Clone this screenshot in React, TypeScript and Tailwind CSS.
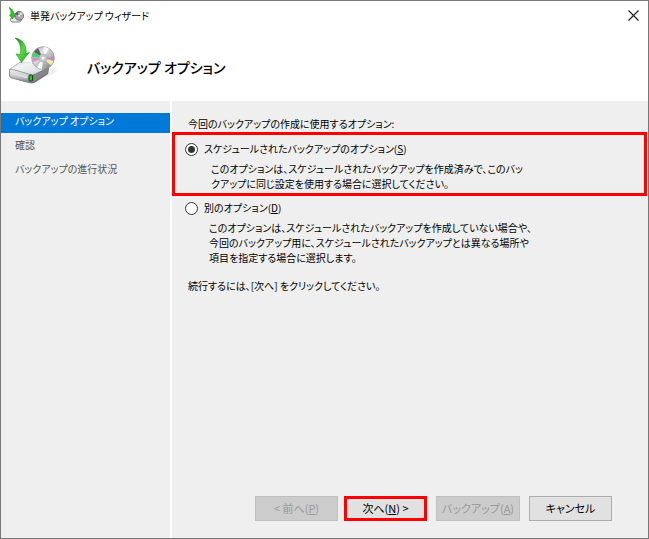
import { useState } from 'react';

const steps = ['バックアップ オプション', '確認', 'バックアップの進行状況'];

function BackupIcon() {
  return (
    <svg viewBox="0 0 48 48" className="h-12 w-12" aria-hidden="true">
      <defs>
        <linearGradient id="drive-top" x1="0" y1="0" x2="1" y2="1">
          <stop offset="0" stopColor="#c9cacc" />
          <stop offset="0.3" stopColor="#f2f3f4" />
          <stop offset="0.7" stopColor="#e2e3e5" />
          <stop offset="1" stopColor="#97999c" />
        </linearGradient>
        <linearGradient id="drive-front" x1="0" y1="0" x2="0" y2="1">
          <stop offset="0" stopColor="#f3f4f5" />
          <stop offset="0.6" stopColor="#bcbec1" />
          <stop offset="1" stopColor="#7c7e81" />
        </linearGradient>
        <linearGradient id="disc" x1="0" y1="0" x2="1" y2="1">
          <stop offset="0" stopColor="#97979a" />
          <stop offset="0.35" stopColor="#e4e4e6" />
          <stop offset="0.6" stopColor="#bcbcbf" />
          <stop offset="1" stopColor="#77777a" />
        </linearGradient>
        <linearGradient id="arrow" x1="0" y1="0" x2="1" y2="1">
          <stop offset="0" stopColor="#0f8510" />
          <stop offset="0.5" stopColor="#5bd840" />
          <stop offset="1" stopColor="#1c9c1b" />
        </linearGradient>
      </defs>
      <path d="M24 46 L46 36 Q50 33 44 31 L34 40 Z" fill="#efefef" />
      <path d="M0 34 Q0 32 2 31 L11 25 L34 27 Q40 29 40 32 L39 37 L26 45.500 Q23 47 20 46 L2 41 Q0 40 0 38 Z" fill="#6f7174" />
      <path d="M1 32 L10 26 Q12 24.500 15 25 L36 28 Q40 29 38 31 L26 37 Q23 38.500 19 37.500 Z" fill="url(#drive-top)" />
      <path
        d="M2 32 L20 37 Q24 38 24 40 L24 44 Q23 46 20 45.500 L3 41 Q0.500 40 0.500 38 L0.500 34 Q0.500 32 2 32 Z"
        fill="url(#drive-front)"
        stroke="#8b8d90"
        strokeWidth="0.8"
      />
      <path d="M3 35 L18 39 L18 41.500 L3 37.500 Z" fill="#dcdddf" />
      <path d="M25 38 L39 31 L38.500 36 L25 44.500 Z" fill="#85878a" />
      <rect x="20" y="38" width="3.500" height="6" rx="1" fill="#1fc922" stroke="#17431a" strokeWidth="1" />
      <circle cx="34" cy="21" r="11.300" fill="url(#disc)" stroke="#8d8d90" strokeWidth="0.7" />
      <path d="M34 21 L25 15 A11 11 0 0 1 29 11.200 Z" fill="#5f6064" />
      <path d="M34 21 L23.200 20 A11 11 0 0 1 25 15 Z" fill="#2fdc6c" />
      <path d="M34 21 L24 25 A11 11 0 0 1 23.200 20.500 Z" fill="#d58fc8" />
      <path d="M34 21 L35 10 A11 11 0 0 1 40 11.700 Z" fill="#fafafa" />
      <path d="M34 21 L44.900 20 A11 11 0 0 1 44.500 24 Z" fill="#c58ab8" />
      <path d="M34 21 L44.500 24 A11 11 0 0 1 42 28.500 Z" fill="#efeda0" />
      <path d="M34 21 L33 32 A11 11 0 0 1 28 30.200 Z" fill="#fafafa" />
      <circle cx="34" cy="21" r="4" fill="#c9cacf" stroke="#a0a1a5" strokeWidth="0.5" />
      <circle cx="34" cy="21" r="2" fill="#ffffff" stroke="#a4a4a8" strokeWidth="0.5" />
      <path
        d="M6 1 C13 2 18 8 17 16.500 L20.500 15.500 Q16 20 12.500 25.500 Q9.500 20.500 7 17 L11 17.500 C13 11 11 5 6 1 Z"
        fill="url(#arrow)"
        stroke="#159a17"
        strokeWidth="0.6"
      />
    </svg>
  );
}

function TitleIcon() {
  return (
    <svg viewBox="0 0 16 16" className="h-4 w-4" aria-hidden="true">
      <path d="M3 11 L6 9 L14 12 L12 15 L4 15 L2.500 13.500 Z" fill="#e6e7e8" stroke="#77797c" strokeWidth="0.9" />
      <circle cx="11.200" cy="8.800" r="4.400" fill="#a9a3a8" stroke="#626266" strokeWidth="0.9" />
      <path d="M11.200 8.800 L7.300 7.300 A4.200 4.200 0 0 1 9.500 5 Z" fill="#4b6660" />
      <path d="M11.200 8.800 L12.500 5 A4.200 4.200 0 0 1 15 7 Z" fill="#dedee0" />
      <path d="M11.200 8.800 L15.300 9 A4.200 4.200 0 0 1 13.500 12.300 Z" fill="#c9a0b4" />
      <circle cx="11.200" cy="8.800" r="1.300" fill="#f4f4f4" stroke="#8b8b8f" strokeWidth="0.4" />
      <path d="M1 0.500 Q5.500 2 5.500 7 L7.500 6.500 L4.500 12 L1.500 8 L3 7.500 Q3.500 3.500 1 0.500 Z" fill="#35c62c" stroke="#149317" strokeWidth="0.6" />
    </svg>
  );
}

interface OptionProps {
  value: string;
  label: string;
  accessKey: string;
  lines: string[];
  checked: boolean;
  onSelect: (value: string) => void;
  className: string;
  textClassName: string;
}

function Option({ value, label, accessKey, lines, checked, onSelect, className, textClassName }: OptionProps) {
  return (
    <div className={className}>
      <label className="flex items-center gap-1.5">
        <input
          type="radio"
          name="backup-option"
          value={value}
          checked={checked}
          onChange={() => onSelect(value)}
          aria-describedby={`${value}-description`}
          className="h-[13px] w-[13px] shrink-0 appearance-none rounded-full border border-[#333] bg-white checked:bg-[radial-gradient(circle,#333_3px,#fff_4px)]"
        />
        <span className="leading-4">
          {label}(<u>{accessKey}</u>)
        </span>
      </label>
      <p id={`${value}-description`} className={textClassName}>
        {lines.map((line) => (
          <span key={line} className="block">
            {line}
          </span>
        ))}
      </p>
    </div>
  );
}

export default function App() {
  const [selected, setSelected] = useState('scheduled');

  return (
    <div className="flex min-h-screen flex-col border border-[#777] bg-[#efefef] font-['Noto_Sans_CJK_JP',sans-serif] text-[10px] text-black [font-feature-settings:'palt']">
      {/* Title bar */}
      <div className="flex h-7 items-center justify-between bg-white pl-[7px] pr-[9px]">
        <div className="flex items-center gap-1.5">
          <TitleIcon />
          <span>単発バックアップ ウィザード</span>
        </div>
        <button type="button" aria-label="閉じる">
          <svg viewBox="0 0 11 11" className="h-[11px] w-[11px]" stroke="#222" strokeWidth="1.2" aria-hidden="true">
            <path d="M0.500 0.500 L10.500 10.500 M10.500 0.500 L0.500 10.500" />
          </svg>
        </button>
      </div>

      {/* Header */}
      <header className="flex h-[72px] items-start bg-white pl-2 pt-2">
        <BackupIcon />
        <h1 className="pl-[30px] pt-[18px] text-[14px] leading-6 font-medium">バックアップ オプション</h1>
      </header>

      <div className="flex flex-1">
        {/* Steps */}
        <nav className="w-[171px] shrink-0 border-r-2 border-white pt-3">
          <ol className="space-y-1 text-[#555]">
            {steps.map((step, i) => (
              <li
                key={step}
                aria-current={i === 0 ? 'step' : undefined}
                className={`h-5 pl-3.5 leading-4 ${i === 0 ? 'bg-[#0078d7] text-white' : ''}`}
              >
                {step}
              </li>
            ))}
          </ol>
        </nav>

        <main className="flex flex-1 flex-col">
          <p className="px-4 pt-[15px] leading-4">今回のバックアップの作成に使用するオプション:</p>
          <Option
            value="scheduled"
            label="スケジュールされたバックアップのオプション"
            accessKey="S"
            lines={[
              'このオプションは、スケジュールされたバックアップを作成済みで、このバッ',
              'クアップに同じ設定を使用する場合に選択してください。',
            ]}
            checked={selected === 'scheduled'}
            onSelect={setSelected}
            className="mr-px h-16 border-3 border-[#f00] pl-2.5 pt-1.5"
            textClassName="pl-[26px] pt-1 leading-[15px]"
          />
          <Option
            value="other"
            label="別のオプション"
            accessKey="D"
            lines={[
              'このオプションは、スケジュールされたバックアップを作成していない場合や、',
              '今回のバックアップ用に、スケジュールされたバックアップとは異なる場所や',
              '項目を指定する場合に選択します。',
            ]}
            checked={selected === 'other'}
            onSelect={setSelected}
            className="pl-[13px] pt-1"
            textClassName="pl-6 pt-1 leading-[15px]"
          />
          <p className="px-4 pt-[13px] leading-4">続行するには、[次へ] をクリックしてください。</p>

          {/* Wizard buttons */}
          <div className="mt-auto flex justify-end gap-[9px] pr-9 pb-[17px] text-[11px]">
            <div className="flex gap-1.5">
              <button type="button" disabled className="h-[25px] w-[83px] border border-[#bfbfbf] bg-[#ccc] text-[#999]">
                &lt; 前へ(<u>P</u>)
              </button>
              <button type="button" className="h-[25px] w-[83px] border-3 border-[#f00] bg-[#e1e1e1]">
                次へ(<u>N</u>) &gt;
              </button>
            </div>
            <button type="button" disabled className="h-[25px] w-[84px] border border-[#bfbfbf] bg-[#ccc] text-[#999]">
              バックアップ(<u>A</u>)
            </button>
            <button type="button" className="h-[25px] w-[83px] border border-[#adadad] bg-[#e1e1e1]">
              キャンセル
            </button>
          </div>
        </main>
      </div>
    </div>
  );
}
